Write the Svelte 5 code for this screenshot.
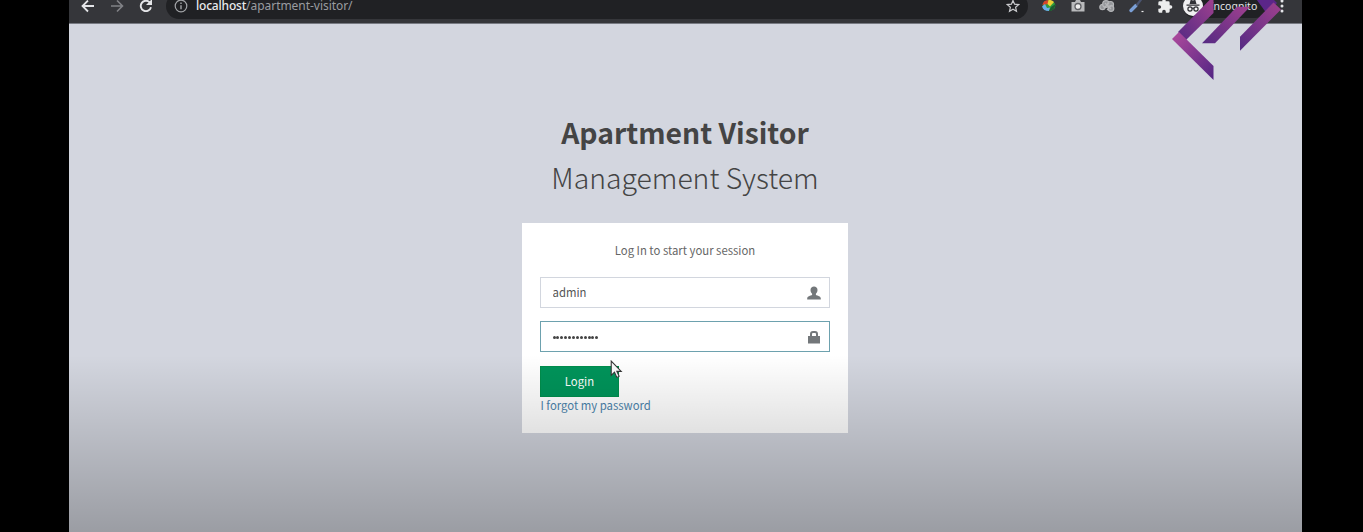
<script>
  let username = $state('admin');
  let password = $state('adminadmin12');
</script>

<div class="stage">
  <div class="screen">
    <header class="toolbar">
      <nav class="nav">
        <svg viewBox="0 0 16 16" width="16" height="16"><path d="M14 8H3M8 2.5 2.5 8 8 13.5" fill="none" stroke="#e4e5e8" stroke-width="1.8" /></svg>
        <svg viewBox="0 0 16 16" width="16" height="16"><path d="M2 8h11M8 2.5 13.5 8 8 13.5" fill="none" stroke="#808286" stroke-width="1.6" /></svg>
        <svg viewBox="0 0 16 16" width="16" height="16"><path d="M13 9.3A5.2 5.2 0 1 1 11.8 4.4" fill="none" stroke="#e4e5e8" stroke-width="1.9" /><path d="M14 1v6H8z" fill="#e4e5e8" /></svg>
      </nav>
      <div class="address">
        <svg viewBox="0 0 14 14" width="14" height="14"><circle cx="7" cy="7" r="5.8" fill="none" stroke="#a3a5a8" stroke-width="1.2" /><path d="M7 6.200v4M7 3.600v1.500" stroke="#a3a5a8" stroke-width="1.4" /></svg>
        <span class="url"><b>localhost</b><span>/apartment-visitor/</span></span>
        <svg class="star" viewBox="0 0 14 14" width="14" height="14"><path d="m7 1.400 1.600 3.800 4.100.4-3.100 2.700.9 4L7 10.200l-3.500 2.100.9-4L1.300 5.600l4.100-.4z" fill="none" stroke="#c9cacd" stroke-width="1.2" /></svg>
      </div>
      <div class="extensions">
        <svg viewBox="0 0 16 16" width="16" height="16"><ellipse cx="8" cy="7.500" rx="6.300" ry="5.300" fill="#2f9b3c" /><path d="M1.500 7A6.300 5.500 0 0 1 7.500 2L7 6z" fill="#d8452b" /><path d="M7.500 2a6 5.500 0 0 1 5.500 2L9 8.500 6.500 6z" fill="#edd035" /><path d="m1 8.500 3-2.500 2 4 3-.5L8 13C4 13 2 11.500 1 8.500z" fill="#6aaee8" /><path d="M8 13c3.500 0 6-2.500 6.500-7L10 9z" fill="#1d5a31" /></svg>
        <svg viewBox="0 0 16 16" width="16" height="16"><path d="M1.500 4H5l1-2h4l1 2h3.500v9.500h-13z" fill="#b9babc" /><circle cx="8" cy="8.500" r="3" fill="#eee" stroke="#606165" stroke-width="1.300" /></svg>
        <svg viewBox="0 0 16 16" width="16" height="16"><g fill="#94969a" stroke="#b5b6b9" stroke-width="1.200"><circle cx="3.500" cy="9" r="2.700" /><circle cx="7" cy="6" r="3.300" /><circle cx="11.500" cy="6.500" r="3" /><circle cx="12" cy="10.500" r="2.800" /><path d="m5 10 5-5M8 12l5-5M6 5l6 6" /></g></svg>
        <svg viewBox="0 0 16 16" width="16" height="16"><path d="m3 12.500 5-5" stroke="#7a9fd6" stroke-width="3.400" stroke-linecap="round" /><path d="m8.500 7.500 5-6.500" stroke="#4a5470" stroke-width="2.200" /><path d="M13.500 13.500H15.500" stroke="#eee" stroke-width="1.200" /></svg>
        <svg viewBox="0 0 24 24" width="16" height="16"><path transform="rotate(0)" fill="#eceded" d="M20.500 11H19V7a2 2 0 0 0-2-2h-4V3.500a2.500 2.500 0 0 0-5 0V5H4a2 2 0 0 0-2 2v3.800h1.500a2.700 2.700 0 0 1 0 5.400H2V20a2 2 0 0 0 2 2h3.800v-1.500a2.700 2.700 0 0 1 5.400 0V22H17a2 2 0 0 0 2-2v-4h1.500a2.500 2.500 0 0 0 0-5z" /></svg>
      </div>
      <div class="incognito">
        <svg viewBox="0 0 20 20" width="20" height="20"><circle cx="10" cy="10" r="10" fill="#f0f0f1" /><path d="M6.500 8 7.700 3.800l2.300.7 2.300-.7L13.500 8zM3.500 8.500h13v1.200h-13z" fill="#303135" /><g fill="none" stroke="#303135" stroke-width="1.200"><circle cx="7" cy="13" r="2.100" /><circle cx="13" cy="13" r="2.100" /><path d="M9 12.500q1-.7 2 0" /></g></svg>
        <span>Incognito</span>
      </div>
      <svg class="dots" viewBox="0 0 4 16" width="4" height="16" fill="#e4e5e8"><circle cx="2" cy="3" r="1.500" /><circle cx="2" cy="8" r="1.500" /><circle cx="2" cy="13" r="1.500" /></svg>
    </header>

    <main class="page">
      <h1><b>Apartment Visitor</b><span>Management System</span></h1>
      <form class="card" onsubmit={(e) => e.preventDefault()}>
        <p>Log In to start your session</p>
        <label class="field">
          <input type="text" bind:value={username} />
          <svg viewBox="0 0 14 14" width="14" height="14"><path d="M7 .5c2 0 3.500 1.300 3.500 3.500 0 1.800-.8 3-1.600 3.800v1.300c1.600.8 4.900 1.200 4.900 3.400v1H.2v-1c0-2.200 3.300-2.600 4.900-3.400V7.800C4.300 7 3.500 5.800 3.500 4 3.500 1.800 5 .5 7 .5z" fill="#73777a" /></svg>
        </label>
        <label class="field focused">
          <span class="mask" aria-label="Password, {password.length} characters">{#each password as _}<i></i>{/each}</span>
          <svg viewBox="0 0 14 14" width="14" height="14"><path d="M1 6h12v7.500H1z" fill="#73777a" /><path d="M4 6.500V4a2 2 0 0 1 2-2h2a2 2 0 0 1 2 2v2.500" fill="none" stroke="#73777a" stroke-width="2" /></svg>
        </label>
        <button type="submit">Login</button>
        <a href="#forgot">I forgot my password</a>
      </form>
    </main>
    <div class="shade"></div>
  </div>

  <svg class="cursor" viewBox="0 0 12 18" width="13" height="19"><path d="M1 1v13.500l3.100-3 2.200 5 2.200-1-2.200-4.700h4.200z" fill="#f7f7f7" stroke="#333" stroke-width="1" /></svg>

  <svg class="brand" viewBox="0 0 112 82" width="112" height="82">
    <defs>
      <linearGradient id="rise" x1="1" y1="0" x2="0" y2="1"><stop offset="0" stop-color="#a0418f" /><stop offset="1" stop-color="#552a83" /></linearGradient>
      <linearGradient id="fall" x1="0" y1="0" x2="1" y2="1"><stop offset="0" stop-color="#b04b9d" /><stop offset="1" stop-color="#522583" /></linearGradient>
    </defs>
    <path d="M8 32 43.500-4v17L16 40z" fill="url(#rise)" />
    <path d="M2 39 9 32l34.500 34v14z" fill="url(#fall)" />
    <path d="M32 43.300 67 6.700h13L45 43.300z" fill="url(#rise)" />
    <path d="M84-4h16l7 7-10 11z" fill="#5b2689" />
    <path d="M70 36.700 103.500 2.500l7.500 7-41 41.300z" fill="url(#rise)" />
  </svg>
</div>

<style>
  :global(body) { margin: 0; background: #000; }
  .stage { position: relative; width: 1363px; height: 532px; overflow: hidden; background: #000; font-family: "Noto Sans CJK SC", sans-serif; }
  .screen { position: relative; width: 1233px; height: 532px; margin-left: 69px; background: #d3d6df; overflow: hidden; }
  .toolbar { display: flex; align-items: center; box-sizing: border-box; height: 24px; padding-bottom: 11px; background: #35363a; border-bottom: 1px solid #777a82; }
  svg { display: block; flex: none; }
  .nav { display: flex; gap: 13px; padding-left: 11px; width: 86px; flex: none; }
  .address { display: flex; align-items: center; box-sizing: border-box; width: 862px; height: 26px; flex: none; padding: 0 8px; border-radius: 13px; background: #202124; }
  .url { display: flex; margin-left: 8px; color: #9a9ca0; font: 12px/12px "Noto Sans", sans-serif; letter-spacing: -.04px; }
  .url b { color: #e8eaed; font-weight: 500; letter-spacing: -.2px; }
  .star { margin-left: auto; }
  .extensions { display: flex; margin-left: 6px; gap: 13px; padding: 0 6.500px; }
  .incognito { display: flex; align-items: center; gap: 7px; width: 84px; height: 24px; flex: none; margin-left: 4px; border-radius: 12px; background: #202124; color: #e4e5e8; font: 10.500px/12px "Noto Sans", sans-serif; }
  .dots { margin-left: 13px; }
  .page { display: flex; flex-direction: column; align-items: center; padding-right: 2px; }
  h1 { display: flex; flex-direction: column; align-items: center; margin: 85px 0 0; padding-left: 1px; color: #444; font-size: 28.350px; font-weight: 300; line-height: 45px; }
  h1 b { font-weight: 700; }
  .card { display: flex; flex-direction: column; align-items: flex-start; box-sizing: border-box; width: 326px; height: 210px; margin-top: 24px; padding: 18px; background: #fff; color: #666; font-size: 11.350px; }
  p { margin: 0 0 17px; padding-left: 1px; align-self: center; line-height: 19px; }
  .field { display: flex; align-items: center; justify-content: space-between; box-sizing: border-box; width: 290px; height: 31px; margin-bottom: 13px; padding: 0 8px 0 12px; border: 1px solid #d2d6de; flex: none; }
  .focused { border-color: #6da1ae; margin-bottom: 14px; }
  input { width: 200px; padding: 0 0 1px; border: 0; outline: 0; background: none; color: #555; font: inherit; }
  .mask { display: flex; gap: .9px; padding-top: 2px; }
  .mask i { width: 3px; height: 3px; border-radius: 50%; background: #444; }
  button { box-sizing: border-box; width: 79px; height: 31px; flex: none; padding: 0 0 1px 1px; border: 1px solid #008d4c; background: #00945a; color: #fff; font: inherit; }
  a { padding-left: 1px; color: #4c83ab; line-height: 17px; text-decoration: none; }
  .shade { position: absolute; inset: 355px 0 0; background: linear-gradient(rgba(0, 0, 0, 0), rgba(0, 0, 0, .265)); pointer-events: none; }
  .cursor { position: absolute; left: 610px; top: 360px; }
  .brand { position: absolute; left: 1170px; top: 0; }
</style>
